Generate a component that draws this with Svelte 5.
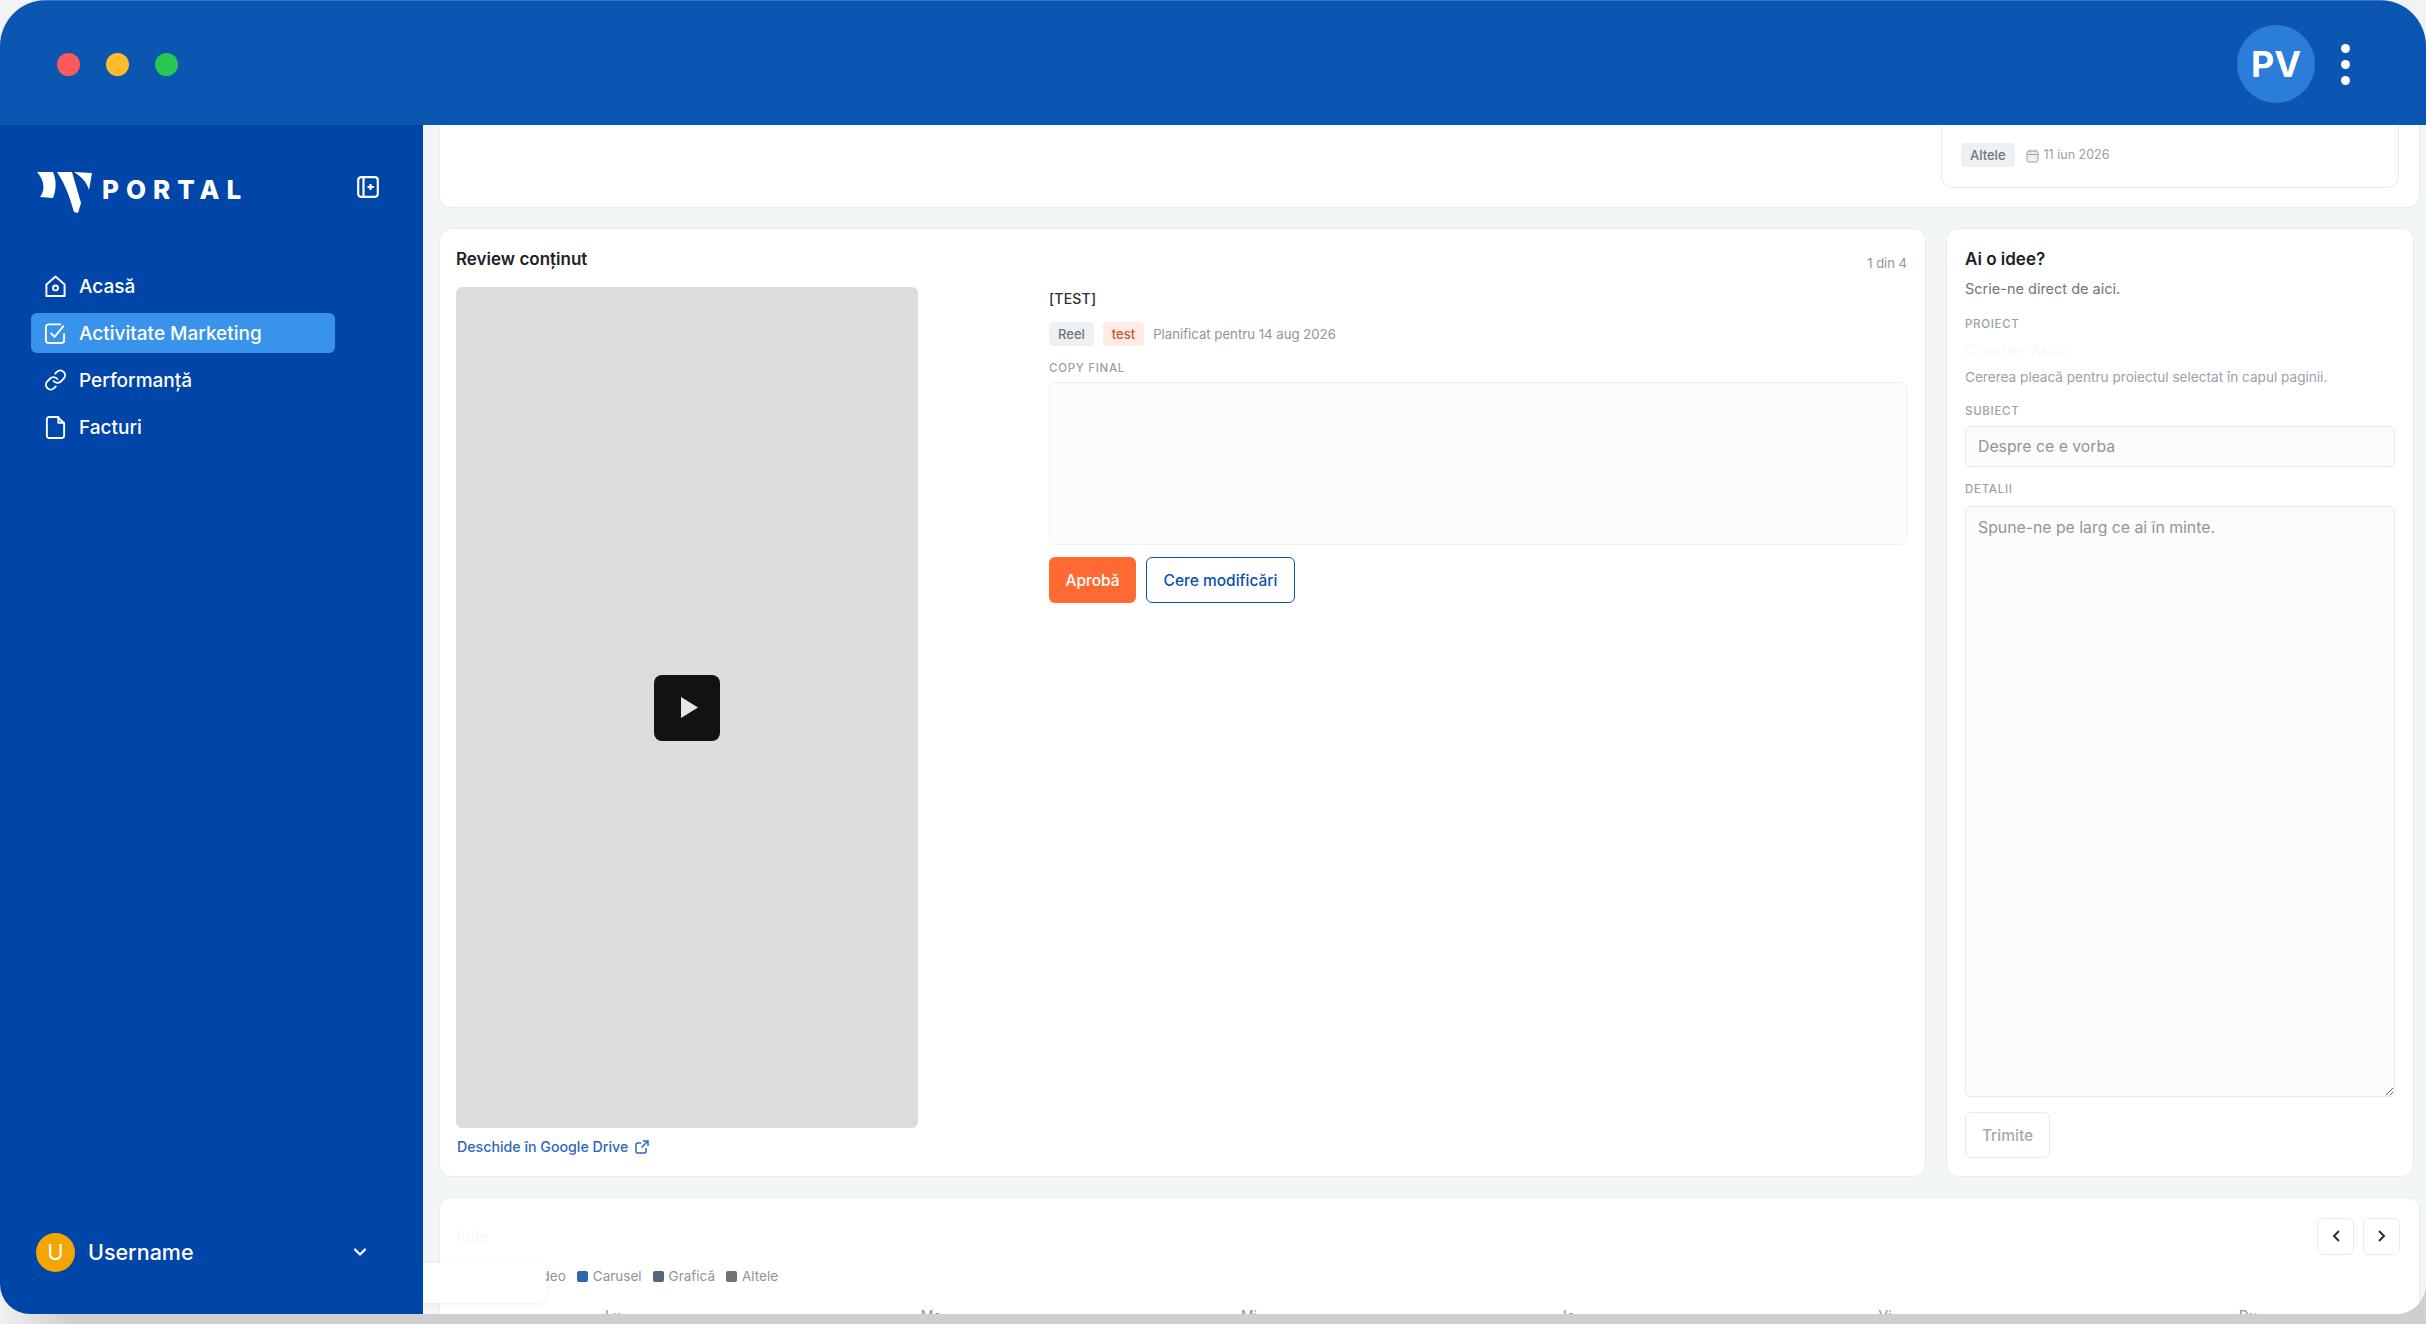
<script>
  const nav = [
    { label: 'Acasă', icon: 'home' },
    { label: 'Activitate Marketing', icon: 'check', active: true },
    { label: 'Performanță', icon: 'link' },
    { label: 'Facturi', icon: 'file' }
  ]
  const legend = [
    { label: 'Video', color: '#2f9e6e' },
    { label: 'Carusel', color: '#2f66ad' },
    { label: 'Grafică', color: '#55657a' },
    { label: 'Altele', color: '#6c7278' }
  ]
  const days = ['Lu', 'Ma', 'Mi', 'Jo', 'Vi', 'Du']
</script>

<div class="page">
  <div class="window">
    <header class="topbar">
      <div class="lights">
        <span class="light red"></span>
        <span class="light yellow"></span>
        <span class="light green"></span>
      </div>
      <div class="top-right">
        <div class="avatar">PV</div>
        <div class="dots"><span></span><span></span><span></span></div>
      </div>
    </header>

    <div class="body">
      <aside class="sidebar">
        <div class="brand">
          <div class="logo">
            <svg width="55" height="43" viewBox="0 0 55 43" fill="#fff">
              <path d="M0 1 L16 1 C20 10 19 20 16 27 L3 26 C8 20 8 10 0 1Z" />
              <path d="M20 1 L35 1 L44 32 L41 42 L37 41 C33 28 29 14 20 1Z" />
              <path d="M37 1 L55 2 L52 19 C50 12 45 6 37 1Z" />
            </svg>
            <span class="wordmark">PORTAL</span>
          </div>
          <svg class="collapse" width="22" height="22" viewBox="0 0 22 22" fill="none" stroke="#fff" stroke-width="2.2">
            <rect x="1.2" y="1.2" width="19.6" height="19.6" rx="3" />
            <path d="M6.5 1.2v19.6M17 11h-6.500M13.500 8v6" />
          </svg>
        </div>

        <nav class="nav">
          {#each nav as item}
            <div class="nav-item" class:active={item.active}>
              <svg width="23" height="24" viewBox="0 0 24 24" fill="none" stroke="#fff" stroke-width="2" stroke-linecap="round" stroke-linejoin="round">
                {#if item.icon === 'home'}
                  <path d="M2.5 10.5 12 2l9.500 8.500V22.500h-19z" />
                  <circle cx="12" cy="14" r="2.6" />
                {:else if item.icon === 'check'}
                  <path d="M21 13v6.500a3 3 0 0 1-3 3H5a3 3 0 0 1-3-3V6a3 3 0 0 1 3-3h12" />
                  <path d="M7.5 12.500l3.500 3.500L20 5" />
                {:else if item.icon === 'link'}
                  <path d="M10 13a5 5 0 0 0 7.54.54l3-3a5 5 0 0 0-7.07-7.07l-1.72 1.71" />
                  <path d="M14 11a5 5 0 0 0-7.54-.54l-3 3a5 5 0 0 0 7.07 7.07l1.71-1.71" />
                {:else}
                  <path d="M3 4a2.5 2.5 0 0 1 2.5-2.500H14L21 8v13a2.500 2.500 0 0 1-2.500 2.500h-13A2.500 2.500 0 0 1 3 21z" />
                  <path d="M15 1.500V7.500h6" />
                {/if}
              </svg>
              <span>{item.label}</span>
            </div>
          {/each}
        </nav>

        <div class="user">
          <div class="user-avatar">U</div>
          <span class="user-name">Username</span>
          <svg width="16" height="16" viewBox="0 0 16 16" fill="none" stroke="#fff" stroke-width="2.2" stroke-linecap="round" stroke-linejoin="round">
            <path d="M3 5.500l5 5 5-5" />
          </svg>
        </div>
      </aside>

      <main class="main">
        <section class="card top-card">
          <div class="mini-card">
            <span class="tag grey">Altele</span>
            <svg width="13" height="14" viewBox="0 0 13 14" fill="#eef0f2" stroke="#9aa1a8" stroke-width="1">
              <rect x="1" y="2" width="11" height="11" rx="1.5" />
              <path d="M1 5.500h11M4 .5v3M9 .5v3" />
            </svg>
            <span class="date">11 iun 2026</span>
          </div>
        </section>

        <div class="middle">
          <section class="card review">
            <div class="review-head">
              <h2>Review conținut</h2>
              <span class="count">1 din 4</span>
            </div>
            <div class="review-body">
              <div class="media">
                <div class="video">
                  <div class="play">
                    <svg width="17" height="21" viewBox="0 0 17 21"><path d="M0 0 L17 10.5 L0 21Z" fill="#e6e6e6" /></svg>
                  </div>
                </div>
                <a class="drive" href="#drive">
                  Deschide în Google Drive
                  <svg width="14" height="14" viewBox="0 0 14 14" fill="none" stroke="#2f66bd" stroke-width="1.5">
                    <path d="M11 8v3.500a1.500 1.500 0 0 1-1.500 1.500h-7A1.500 1.500 0 0 1 1 11.500v-7A1.500 1.500 0 0 1 2.500 3H6M8 1h5v5M13 1L6.500 7.500" />
                  </svg>
                </a>
              </div>
              <div class="details">
                <div class="title">[TEST]</div>
                <div class="tags">
                  <span class="tag grey">Reel</span>
                  <span class="tag orange">test</span>
                  <span class="planned">Planificat pentru 14 aug 2026</span>
                </div>
                <div class="label copy-label">COPY FINAL</div>
                <div class="copy-box"></div>
                <div class="actions">
                  <button class="btn approve">Aprobă</button>
                  <button class="btn changes">Cere modificări</button>
                </div>
              </div>
            </div>
          </section>

          <section class="card idea">
            <h2>Ai o idee?</h2>
            <p class="lead">Scrie-ne direct de aici.</p>
            <div class="label project-label">PROIECT</div>
            <div class="project-name">Quartier Auto</div>
            <p class="hint">Cererea pleacă pentru proiectul selectat în capul paginii.</p>
            <label class="label subject-label" for="subject">SUBIECT</label>
            <input id="subject" class="field" placeholder="Despre ce e vorba" />
            <label class="label details-label" for="details">DETALII</label>
            <textarea id="details" class="field area" placeholder="Spune-ne pe larg ce ai în minte."></textarea>
            <button class="send">Trimite</button>
          </section>
        </div>

        <section class="card calendar">
          <div class="cal-head">
            <span class="cal-title">Iulie</span>
            <div class="pager">
              <button aria-label="Înapoi">
                <svg width="12" height="14" viewBox="0 0 12 14" fill="none" stroke="#2b2f33" stroke-width="2"><path d="M9 2L4 7l5 5" /></svg>
              </button>
              <button aria-label="Înainte">
                <svg width="12" height="14" viewBox="0 0 12 14" fill="none" stroke="#2b2f33" stroke-width="2"><path d="M3 2l5 5-5 5" /></svg>
              </button>
            </div>
          </div>
          <div class="legend">
            {#each legend as entry}
              <span class="legend-item"><i style="background: {entry.color}"></i>{entry.label}</span>
            {/each}
          </div>
          <div class="days">
            {#each days as day}
              <span>{day}</span>
            {/each}
          </div>
        </section>

        <div class="toast"></div>
      </main>
    </div>
  </div>
</div>

<style>
:global(body) {
  margin: 0;
  background: #f1f3f4;
}

.page {
  width: 2426px;
  height: 1324px;
  overflow: hidden;
  font-family: 'Inter', 'Noto Sans', sans-serif;
  background:
    linear-gradient(to bottom, #f1f3f4 1270px, rgba(241, 243, 244, 0) 1290px),
    linear-gradient(to right, #f0f1f2, #cdcfd0 70px);
}

.window {
  width: 2426px;
  height: 1314px;
  border-radius: 46px 46px 30px 30px;
  overflow: hidden;
  display: flex;
  flex-direction: column;
  background: #f3f6f7;
}

.topbar {
  height: 125px;
  box-sizing: border-box;
  flex-shrink: 0;
  background: #0a56b0;
  box-shadow: inset 0 1px 0 rgba(255, 255, 255, 0.2);
  display: flex;
  align-items: center;
  justify-content: space-between;
  padding: 3px 76px 0 57px;
}

.lights {
  display: flex;
  gap: 26px;
}

.light {
  width: 23px;
  height: 23px;
  border-radius: 50%;
}

.red { background: #ff5a5a; }
.yellow { background: #fdbc2e; }
.green { background: #27c84f; }

.top-right {
  display: flex;
  align-items: center;
  gap: 26px;
}

.avatar {
  width: 78px;
  height: 78px;
  border-radius: 50%;
  background: #2a7dd9;
  color: #fff;
  font-size: 36px;
  font-weight: 700;
  display: flex;
  align-items: center;
  justify-content: center;
}

.dots {
  display: flex;
  flex-direction: column;
  gap: 7px;
}

.dots span {
  width: 9px;
  height: 9px;
  border-radius: 50%;
  background: #fff;
}

.body {
  flex: 1;
  display: flex;
  min-height: 0;
}

.sidebar {
  width: 423px;
  flex-shrink: 0;
  background: #0045a8;
  display: flex;
  flex-direction: column;
  color: #fff;
}

.brand {
  display: flex;
  align-items: flex-start;
  justify-content: space-between;
  padding: 46px 44px 0 37px;
}

.logo {
  display: flex;
  align-items: flex-start;
  gap: 10px;
}

.logo svg {
  display: block;
}

.wordmark {
  font-size: 26px;
  line-height: 26px;
  margin-top: 6px;
  font-weight: 800;
  letter-spacing: 7px;
}

.collapse {
  margin-top: 5px;
}

.nav {
  display: flex;
  flex-direction: column;
  gap: 7px;
  margin: 52px 0 0 31px;
  width: 304px;
}

.nav-item {
  height: 40px;
  display: flex;
  align-items: center;
  gap: 12px;
  padding-left: 13px;
  border-radius: 6px;
  font-size: 19px;
  font-weight: 500;
}

.nav-item.active {
  background: #3993ea;
}

.user {
  margin-top: auto;
  height: 42px;
  margin-bottom: 41px;
  display: flex;
  align-items: center;
  padding: 0 55px 0 36px;
}

.user-avatar {
  width: 39px;
  height: 39px;
  border-radius: 50%;
  background: #f5a500;
  font-size: 22px;
  font-weight: 400;
  display: flex;
  align-items: center;
  justify-content: center;
  margin-right: 13px;
}

.user-name {
  flex: 1;
  font-size: 21.5px;
  font-weight: 500;
}

.main {
  flex: 1;
  min-width: 0;
  position: relative;
  overflow: hidden;
  padding: 0 6px 0 16px;
  display: flex;
  flex-direction: column;
  gap: 20px;
}

.card {
  background: #fff;
  border: 1px solid #e8ecee;
  border-radius: 12px;
  box-sizing: border-box;
}

.top-card {
  height: 83px;
  flex-shrink: 0;
  border-top: 0;
  border-radius: 0 0 12px 12px;
  padding: 0 20px 0 0;
  display: flex;
  justify-content: flex-end;
}

.mini-card {
  width: 458px;
  height: 63px;
  box-sizing: border-box;
  border: 1px solid #e8ecee;
  border-top: 0;
  border-radius: 0 0 12px 12px;
  padding: 18px 0 0 19px;
  display: flex;
  align-items: flex-start;
  gap: 11px;
}

.tag {
  display: inline-flex;
  align-items: center;
  justify-content: center;
  height: 24px;
  padding: 0 9px;
  border-radius: 4px;
  font-size: 13px;
  font-weight: 500;
}

.grey {
  background: #eef1f4;
  color: #6f767d;
}

.orange {
  background: #ffebe4;
  color: #c4593a;
}

.mini-card svg {
  margin-top: 6px;
  margin-right: -6px;
}

.date {
  font-size: 12.5px;
  line-height: 24px;
  color: #9aa1a8;
}

.middle {
  display: flex;
  gap: 20px;
  height: 949px;
  flex-shrink: 0;
  margin-right: 6px;
}

.review {
  width: 1487px;
  flex-shrink: 0;
  padding: 18px 18px 0 16px;
}

.review-head {
  display: flex;
  justify-content: space-between;
  align-items: flex-start;
  height: 25px;
}

h2 {
  margin: 0;
  font-size: 17px;
  font-weight: 600;
  line-height: 24px;
  color: #1e2124;
}

.count {
  font-size: 13px;
  line-height: 16px;
  margin-top: 8px;
  color: #8f959b;
}

.review-body {
  display: flex;
  gap: 131px;
  margin-top: 15px;
}

.media {
  width: 462px;
  flex-shrink: 0;
}

.video {
  height: 841px;
  border-radius: 6px;
  background: #dcdcdc;
  display: flex;
  align-items: center;
  justify-content: center;
}

.play {
  width: 66px;
  height: 66px;
  border-radius: 8px;
  background: #121212;
  display: flex;
  align-items: center;
  justify-content: center;
  padding-left: 4px;
  box-sizing: border-box;
}

.drive {
  display: flex;
  align-items: center;
  gap: 7px;
  margin: 10px 0 0 1px;
  font-size: 14.2px;
  font-weight: 500;
  color: #2f66bd;
  text-decoration: none;
}

.details {
  flex: 1;
  min-width: 0;
}

.title {
  font-size: 14px;
  font-weight: 500;
  letter-spacing: 0.2px;
  color: #2b2f33;
  height: 22px;
  line-height: 22px;
  margin-top: 1px;
}

.tags {
  display: flex;
  align-items: center;
  gap: 9px;
  margin-top: 12px;
}

.planned {
  font-size: 13.2px;
  color: #8f959b;
}

.label {
  display: block;
  font-size: 11.5px;
  line-height: 14px;
  letter-spacing: 0.7px;
  color: #9aa1a8;
  font-weight: 500;
}

.copy-label {
  margin-top: 15px;
}

.copy-box {
  height: 163px;
  margin-top: 7px;
  background: #fbfcfc;
  border: 1px solid #eef1f2;
  border-radius: 6px;
  box-sizing: border-box;
}

.actions {
  display: flex;
  gap: 10px;
  margin-top: 12px;
}

.btn {
  height: 46px;
  border-radius: 6px;
  font-family: inherit;
  font-size: 15.5px;
  font-weight: 500;
  box-sizing: border-box;
  padding: 0;
}

.approve {
  width: 87px;
  background: #ff6a33;
  color: #fff;
  border: 0;
}

.changes {
  width: 149px;
  background: #fff;
  color: #0a4fb0;
  border: 1.5px solid #0a4fb0;
}

.idea {
  flex: 1;
  min-width: 0;
  padding: 18px 18px 0 18px;
  display: flex;
  flex-direction: column;
  align-items: flex-start;
}

.lead {
  margin: 7px 0 0;
  font-size: 14.5px;
  line-height: 22px;
  color: #6f767d;
}

.project-label {
  margin-top: 17px;
}

.project-name {
  margin-top: 9px;
  font-size: 16px;
  line-height: 20px;
  color: #f8f9f9;
}

.hint {
  margin: 7px 0 0;
  font-size: 13.6px;
  line-height: 20px;
  color: #9aa1a8;
}

.subject-label {
  margin-top: 17px;
}

.details-label {
  margin-top: 15px;
}

.field {
  width: 100%;
  box-sizing: border-box;
  margin-top: 8px;
  height: 41px;
  padding: 0 12px;
  border: 1px solid #e6eaec;
  border-radius: 5px;
  background: #fbfcfc;
  font-family: inherit;
  font-size: 15.8px;
  color: #2b2f33;
  outline: none;
}

.field::placeholder {
  color: #8f959b;
}

.area {
  height: 591px;
  margin-top: 10px;
  padding-top: 11px;
  resize: vertical;
  display: block;
}

.send {
  margin-top: 15px;
  width: 85px;
  height: 46px;
  padding: 0;
  background: #fff;
  border: 1px solid #e6eaec;
  border-radius: 6px;
  font-family: inherit;
  font-size: 15.5px;
  font-weight: 500;
  color: #a4aab0;
}

.calendar {
  flex: 1;
  min-height: 200px;
  padding: 19px 19px 0 17px;
  position: relative;
}

.cal-head {
  display: flex;
  justify-content: space-between;
  align-items: center;
  height: 38px;
}

.cal-title {
  color: #f6f7f7;
  font-size: 16px;
}

.pager {
  display: flex;
  gap: 9px;
}

.pager button {
  width: 37px;
  height: 37px;
  padding: 0;
  background: #fff;
  border: 1px solid #e8ecee;
  border-radius: 6px;
  display: flex;
  align-items: center;
  justify-content: center;
}

.legend {
  display: flex;
  gap: 11px;
  margin-top: 13px;
  padding-left: 56px;
  font-size: 13.5px;
  line-height: 17px;
  color: #8f959b;
}

.legend-item {
  display: flex;
  align-items: center;
  gap: 5px;
}

.legend-item i {
  width: 11px;
  height: 11px;
  border-radius: 2px;
}

.days {
  display: grid;
  grid-template-columns: repeat(5, 318px) 408px;
  margin: 22px 0 0 -3px;
  font-size: 14px;
  line-height: 17px;
  color: #8f959b;
  text-align: center;
}

.toast {
  position: absolute;
  left: 0;
  top: 1138px;
  width: 123px;
  height: 40px;
  background: #fff;
  border-radius: 0 6px 6px 0;
  box-shadow: 0 1px 6px rgba(0, 0, 0, 0.06);
}
</style>
